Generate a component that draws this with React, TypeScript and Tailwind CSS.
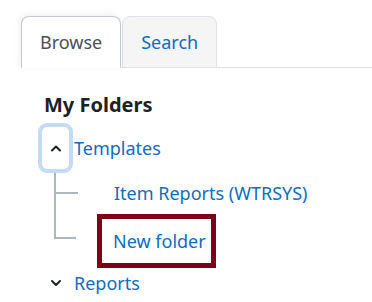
import React from "react";

function ChevronUp() {
  return (
    <svg width="12" height="12" viewBox="0 0 12 12" fill="none">
      <path d="M2 8.5 6 4.5l4 4" stroke="#1d2125" strokeWidth="2" strokeLinecap="round" strokeLinejoin="round" />
    </svg>
  );
}

function ChevronDown() {
  return (
    <svg width="12" height="12" viewBox="0 0 12 12" fill="none">
      <path d="M2 4l4 4 4-4" stroke="#1d2125" strokeWidth="2" strokeLinecap="round" strokeLinejoin="round" />
    </svg>
  );
}

export default function App() {
  return (
    <div
      className="w-[372px] h-[302px] bg-white overflow-hidden text-[18px] text-[#1d2125]"
      style={{ fontFamily: '"Noto Sans", "Open Sans", sans-serif' }}
    >
      {/* tabs */}
      <div className="ml-[21px] mt-[16px] flex items-end border-b border-[#dee2e6]">
        <div className="-mb-px h-[52px] px-[18px] flex items-center rounded-t-[8px] border border-[#c4c8cc] border-b-white bg-white text-[#495057] shadow-[-2px_-2px_6px_rgba(0,0,0,0.06)]">
          Browse
        </div>
        <div className="ml-[1px] -mb-px h-[52px] px-[18px] flex items-center rounded-t-[8px] border border-[#dee2e6] bg-[#f5f5f5] text-[#0f6cbf]">
          Search
        </div>
      </div>

      <div className="pl-[38px]">
        <h3 className="ml-[6px] mt-[19px] text-[20px] font-bold leading-[36px]">My Folders</h3>

        {/* Templates */}
        <div className="flex items-center">
          <button className="w-[35px] h-[50px] rounded-[9px] border-4 border-[#c3dbf5] bg-white flex items-center justify-center">
            <ChevronUp />
          </button>
          <a className="ml-[1px] text-[#0f6cbf]">Templates</a>
        </div>

        {/* children */}
        <div className="ml-[16px]">
          <div className="h-[41px] flex items-stretch">
            <div className="w-[24px] flex flex-col border-l-2 border-[#adb5bd]">
              <div className="h-[21px] border-b-2 border-[#adb5bd]" />
            </div>
            <a className="ml-[36px] self-center text-[#0f6cbf]">Item Reports (WTRSYS)</a>
          </div>
          <div className="h-[54px] flex items-stretch">
            <div className="w-[22px]">
              <div className="h-[25px] border-l-2 border-b-2 border-[#adb5bd]" />
            </div>
            <a className="ml-[21px] border-[5px] border-[#7f0019] pl-[11px] pr-[5px] flex items-center text-[#0f6cbf]">
              New folder
            </a>
          </div>
        </div>

        {/* Reports */}
        <div className="h-[30px] flex items-center">
          <span className="w-[35px] flex items-center justify-center">
            <ChevronDown />
          </span>
          <a className="ml-[1px] text-[#0f6cbf]">Reports</a>
        </div>
      </div>
    </div>
  );
}
